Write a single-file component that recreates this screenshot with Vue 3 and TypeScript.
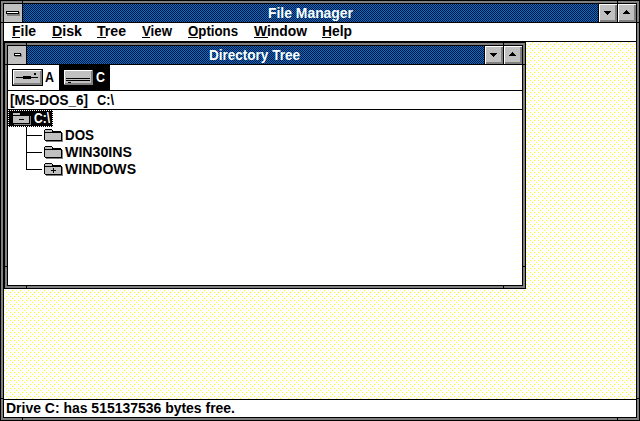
<script setup lang="ts">
import { h } from 'vue'

interface LabelProps {
  text: string
  w: number
  base: number
  mark?: number
}

// A caption fitted to the bitmap font's advance width, with an optional mnemonic underline.
const Caption = (p: LabelProps) =>
  h('svg', { class: 'caption', width: p.w, height: 18 }, [
    h('text', { x: 0, y: p.base, textLength: p.w, lengthAdjust: 'spacingAndGlyphs' }, p.text),
    p.mark ? h('rect', { x: 0, y: p.base + 1, width: p.mark, height: 1 }) : null,
  ])
Caption.props = ['text', 'w', 'base', 'mark']

const menus = [
  { text: 'File', w: 24, mark: 8, slot: 40 },
  { text: 'Disk', w: 30, mark: 10, slot: 45 },
  { text: 'Tree', w: 29, mark: 9, slot: 45 },
  { text: 'View', w: 30, mark: 8, slot: 46 },
  { text: 'Options', w: 50, mark: 10, slot: 66 },
  { text: 'Window', w: 53, mark: 14, slot: 68 },
  { text: 'Help', w: 30, mark: 9, slot: 40 },
]

const folders = [
  { name: 'DOS', w: 29, plus: false },
  { name: 'WIN30INS', w: 67, plus: false },
  { name: 'WINDOWS', w: 71, plus: true },
]
</script>

<template>
  <div class="frame app">
    <div class="inner">
      <div class="titlebar">
        <div class="sysbox">
          <svg width="18" height="18"><path fill="#808080" d="M3 8h13v4H3z" /><path d="M2 7h13v3H2z" /><path fill="#fff" d="M3 8h11v1H3z" /></svg>
        </div>
        <div class="title"><Caption text="File Manager" :w="85" :base="14" /></div>
        <div class="btn"><svg width="18" height="18"><path d="M5 7h7v1H5zM6 8h5v1H6zM7 9h3v1H7zM8 10h1v1H8z" /></svg></div>
        <div class="btn"><svg width="18" height="18"><path d="M8 6h1v1H8zM7 7h3v1H7zM6 8h5v1H6zM5 9h7v1H5z" /></svg></div>
      </div>
      <nav class="menubar">
        <div v-for="m in menus" :key="m.text" class="menu" :style="{ width: m.slot + 'px' }">
          <Caption :text="m.text" :w="m.w" :base="13" :mark="m.mark" />
        </div>
      </nav>
      <main class="workspace">
        <section class="frame child">
          <div class="inner">
            <div class="titlebar">
              <div class="sysbox">
                <svg width="18" height="18"><path fill="#808080" d="M7 8h7v3H7z" /><path d="M6 7h7v3H6z" /><path fill="#fff" d="M7 8h5v1H7z" /></svg>
              </div>
              <div class="title"><Caption text="Directory Tree" :w="91" :base="14" /></div>
              <div class="btn"><svg width="18" height="18"><path d="M5 7h7v1H5zM6 8h5v1H6zM7 9h3v1H7zM8 10h1v1H8z" /></svg></div>
              <div class="btn"><svg width="18" height="18"><path d="M8 6h1v1H8zM7 7h3v1H7zM6 8h5v1H6zM5 9h7v1H5z" /></svg></div>
            </div>
            <div class="drives">
              <div class="drive">
                <svg width="31" height="17">
                  <path d="M0 0h31v17H0z" /><path fill="#808080" d="M1 1h29v15H1z" /><path fill="#fff" d="M1 1h28v1H2v13H1z" /><path fill="#c0c0c0" d="M2 2h26v12H2z" />
                  <path d="M4 8h22v1H4zM11 7h8v3h-8zM22 4h2v2h-2z" />
                </svg>
                <Caption text="A" :w="9" :base="13" />
              </div>
              <div class="drive selected">
                <svg width="31" height="17">
                  <path fill="#808080" d="M1 1h29v15H1z" /><path fill="#fff" d="M1 1h28v1H2v13H1z" /><path fill="#c0c0c0" d="M2 2h26v12H2z" />
                  <path d="M3 9h24v1H3zM3 11h24v1H3zM5 13h3v1H5z" />
                </svg>
                <Caption text="C" :w="9" :base="13" />
              </div>
            </div>
            <div class="path"><Caption text="[MS-DOS_6]" :w="78" :base="14" /><Caption text="C:\" :w="17" :base="14" /></div>
            <div class="tree">
              <div class="root">
                <svg width="19" height="13">
                  <path fill="#808080" d="M2 4h17v9H2z" /><path d="M2 0h6v1h1v1h8v1h1v9H1v-1H0V1h1V0z" />
                  <path fill="#c0c0c0" d="M2 1h6v1H1V1zM1 2h7v1H1zM1 4h16v7H1z" />
                  <path d="M7 7h5v1H7z" />
                </svg>
                <Caption text="C:\" :w="16" :base="11" />
              </div>
              <div class="branches">
                <div v-for="f in folders" :key="f.name" class="branch">
                  <svg width="19" height="13">
                    <path fill="#808080" d="M2 4h17v9H2z" /><path d="M2 0h6v1h1v1h8v1h1v9H1v-1H0V1h1V0z" />
                    <path fill="#c0c0c0" d="M2 1h6v1H1V1zM1 2h7v1H1zM1 4h16v7H1z" />
                    <path v-if="f.plus" d="M7 7h5v1H7zM9 5h1v5H9z" />
                  </svg>
                  <Caption :text="f.name" :w="f.w" :base="13" />
                </div>
              </div>
            </div>
          </div>
        </section>
      </main>
      <footer class="status"><Caption text="Drive C: has 515137536 bytes free." :w="229" :base="13" /></footer>
    </div>
  </div>
</template>

<style>
body {
  overflow: hidden;
}
.caption {
  display: block;
  flex: none;
  overflow: visible;
  fill: currentColor;
  font: bold 14px 'Liberation Sans', Arial, sans-serif;
}
</style>

<style scoped>
.frame {
  box-sizing: border-box;
  border: 1px solid #000;
  padding: 2px;
  background:
    linear-gradient(#000, #000) left 21px top 0 / 1px 100% no-repeat,
    linear-gradient(#000, #000) right 21px top 0 / 1px 100% no-repeat,
    linear-gradient(#000, #000) left 0 top 21px / 100% 1px no-repeat,
    linear-gradient(#000, #000) left 0 bottom 21px / 100% 1px no-repeat,
    #808080;
}
.app {
  width: 640px;
  height: 421px;
}
.child {
  width: 522px;
  height: 247px;
}
.inner {
  box-sizing: border-box;
  height: 100%;
  border: 1px solid #000;
  background: #fff;
  display: flex;
  flex-direction: column;
}
svg {
  display: block;
  flex: none;
}
.titlebar {
  display: flex;
  gap: 1px;
  height: 18px;
  background: #000;
  border-bottom: 1px solid #000;
}
.sysbox {
  width: 18px;
  background: #c0c0c0;
}
.title {
  flex: 1;
  display: flex;
  justify-content: center;
  color: #fff;
  background: repeating-conic-gradient(#000080 0 25%, #008080 0 50%) 0 0 / 2px 2px;
}
.child .title {
  padding-right: 2px;
}
.btn {
  box-sizing: border-box;
  width: 18px;
  background: #c0c0c0;
  box-shadow: inset 1px 1px #fff, inset -2px -2px #808080;
}
.menubar {
  display: flex;
  height: 18px;
  padding-left: 8px;
  border-bottom: 1px solid #000;
}
.workspace {
  flex: 1;
  background-color: #fff;
  background-image:
    conic-gradient(from 270deg at 1px 1px, #ff0 25%, transparent 0),
    conic-gradient(from 270deg at 1px 1px, #ff0 25%, transparent 0),
    conic-gradient(from 270deg at 1px 1px, #ff0 25%, transparent 0);
  background-size: 4px 4px, 8px 8px, 8px 8px;
  background-position: 2px 2px, 0 0, 4px 4px;
}
.status {
  height: 17px;
  padding-left: 2px;
  border-top: 1px solid #000;
}
.drives {
  display: flex;
  height: 25px;
  border-bottom: 1px solid #000;
}
.drive {
  box-sizing: border-box;
  display: flex;
  gap: 2px;
  width: 51px;
  padding: 4px;
}
.selected {
  color: #fff;
  background: #000;
}
.path {
  display: flex;
  gap: 9px;
  height: 18px;
  padding-left: 2px;
  border-bottom: 1px solid #000;
}
.tree {
  flex: 1;
}
.root {
  box-sizing: border-box;
  display: flex;
  gap: 3px;
  width: 45px;
  height: 17px;
  padding: 1px 0 0 3px;
  color: #fff;
  background: #000;
  border: 1px dotted #fff;
}
.branches {
  margin-left: 18px;
  background: linear-gradient(#000, #000) 0 0 / 1px 43px no-repeat;
}
.branch {
  display: flex;
  gap: 2px;
  height: 17px;
  padding-left: 18px;
  background: linear-gradient(#000, #000) 0 8px / 16px 1px no-repeat;
}
.branch svg:first-child {
  margin-top: 2px;
}
</style>
